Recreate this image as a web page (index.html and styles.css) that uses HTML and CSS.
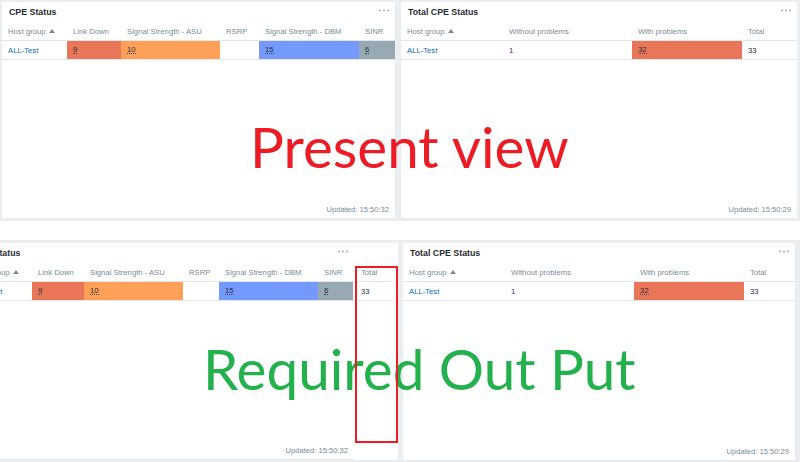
FILE: index.html
```html
<!DOCTYPE html>
<html lang="en">
<head>
<meta charset="utf-8">
<title>CPE Status</title>
<link rel="stylesheet" href="styles.css">
</head>
<body>
<div class="page">
  <section class="shot shot-top">
    <div class="widget w-cpe-top">
      <div class="w-head"><h4>CPE Status</h4><svg class="dots" width="10" height="3" viewBox="0 0 10 3"><circle cx="1" cy="1.5" r="1"/><circle cx="5" cy="1.5" r="1"/><circle cx="9" cy="1.5" r="1"/></svg></div>
      <div class="tbl cols-cpe">
        <div class="th">Host group <svg class="sort" width="6" height="4" viewBox="0 0 6 4"><path d="M0 4L3 0L6 4Z"/></svg></div>
        <div class="th">Link Down</div>
        <div class="th">Signal Strength - ASU</div>
        <div class="th">RSRP</div>
        <div class="th">Signal Strength - DBM</div>
        <div class="th">SINR</div>
        <div class="td"><a class="link">ALL-Test</a></div>
        <div class="td c-high"><span class="num">9</span></div>
        <div class="td c-avg"><span class="num">10</span></div>
        <div class="td"></div>
        <div class="td c-info"><span class="num">15</span></div>
        <div class="td c-nc"><span class="num">6</span></div>
      </div>
      <div class="w-foot">Updated: 15:50:32</div>
    </div>
    <div class="widget w-total-top">
      <div class="w-head"><h4>Total CPE Status</h4><svg class="dots" width="10" height="3" viewBox="0 0 10 3"><circle cx="1" cy="1.5" r="1"/><circle cx="5" cy="1.5" r="1"/><circle cx="9" cy="1.5" r="1"/></svg></div>
      <div class="tbl cols-total-top">
        <div class="th">Host group <svg class="sort" width="6" height="4" viewBox="0 0 6 4"><path d="M0 4L3 0L6 4Z"/></svg></div>
        <div class="th">Without problems</div>
        <div class="th">With problems</div>
        <div class="th">Total</div>
        <div class="td"><a class="link">ALL-Test</a></div>
        <div class="td"><span class="ok">1</span></div>
        <div class="td c-high"><span class="num">32</span></div>
        <div class="td">33</div>
      </div>
      <div class="w-foot">Updated: 15:50:29</div>
    </div>
  </section>

  <div class="spacer"></div>

  <section class="shot shot-bottom">
    <div class="crop">
      <div class="widget w-cpe-bot">
        <div class="w-head"><h4>CPE Status</h4><svg class="dots" width="10" height="3" viewBox="0 0 10 3"><circle cx="1" cy="1.5" r="1"/><circle cx="5" cy="1.5" r="1"/><circle cx="9" cy="1.5" r="1"/></svg></div>
        <div class="tbl cols-cpe-wide">
          <div class="th">Host group <svg class="sort" width="6" height="4" viewBox="0 0 6 4"><path d="M0 4L3 0L6 4Z"/></svg></div>
          <div class="th">Link Down</div>
          <div class="th">Signal Strength - ASU</div>
          <div class="th">RSRP</div>
          <div class="th">Signal Strength - DBM</div>
          <div class="th">SINR</div>
          <div class="th th-total">Total</div>
          <div class="td"><a class="link">ALL-Test</a></div>
          <div class="td c-high"><span class="num">9</span></div>
          <div class="td c-avg"><span class="num">10</span></div>
          <div class="td"></div>
          <div class="td c-info"><span class="num">15</span></div>
          <div class="td c-nc"><span class="num">6</span></div>
          <div class="td th-total">33</div>
        </div>
        <div class="w-foot">Updated: 15:50:32</div>
      </div>
    </div>
    <div class="widget w-total-bot">
      <div class="w-head"><h4>Total CPE Status</h4><svg class="dots" width="10" height="3" viewBox="0 0 10 3"><circle cx="1" cy="1.5" r="1"/><circle cx="5" cy="1.5" r="1"/><circle cx="9" cy="1.5" r="1"/></svg></div>
      <div class="tbl cols-total-bot">
        <div class="th">Host group <svg class="sort" width="6" height="4" viewBox="0 0 6 4"><path d="M0 4L3 0L6 4Z"/></svg></div>
        <div class="th">Without problems</div>
        <div class="th">With problems</div>
        <div class="th">Total</div>
        <div class="td"><a class="link">ALL-Test</a></div>
        <div class="td"><span class="ok">1</span></div>
        <div class="td c-high"><span class="num">32</span></div>
        <div class="td">33</div>
      </div>
      <div class="w-foot">Updated: 15:50:29</div>
    </div>
  </section>

  <div class="note note-present">Present view</div>
  <div class="note note-required">Required Out Put</div>
  <div class="highlight"></div>
</div>
</body>
</html>
```

FILE: styles.css
```css
* {
  box-sizing: border-box;
  margin: 0;
  padding: 0;
}

html, body {
  width: 800px;
  height: 462px;
  overflow: hidden;
  background: #ffffff;
}

body {
  font-family: "Liberation Sans", Arial, sans-serif;
  color: #1f2c33;
}

.page {
  position: relative;
  width: 800px;
  height: 462px;
}

.shot {
  display: flex;
  background: #ebeef0;
}

.shot-top {
  height: 221px;
  gap: 6px;
  padding: 2px 3px 3px 2px;
}

.spacer {
  height: 19px;
  background: #ffffff;
}

.shot-bottom {
  height: 222px;
  gap: 5px;
  padding: 3px 5px 2px 0;
}

.widget {
  background: #ffffff;
  display: flex;
  flex-direction: column;
  height: 100%;
}

.w-cpe-top { width: 393px; }
.w-total-top { width: 396px; }
.w-total-bot { width: 392px; }

.crop {
  width: 398px;
  height: 100%;
  overflow: hidden;
  background: #ffffff;
}

.w-cpe-bot {
  margin-left: -34px;
  width: 388px;
  border-bottom: 1px solid #e6e9eb;
}

.w-head {
  height: 20px;
  display: flex;
  align-items: center;
  justify-content: space-between;
  padding: 0 6px 0 7px;
}

h4 {
  font-size: 8.8px;
  font-weight: bold;
  color: #1f2c33;
}

.dots {
  fill: #a3afb6;
  margin-top: -3px;
}

.tbl {
  display: grid;
}

.cols-cpe { grid-template-columns: 65px 54px 99px 39px 100px 36px; }
.cols-total-top { grid-template-columns: 102px 129px 110px 55px; }
.cols-total-bot { grid-template-columns: 102px 129px 110px 51px; }
.cols-cpe-wide { grid-template-columns: 66px 52px 99px 36px 99px 35px 40px; width: 427px; }

.th, .td {
  height: 19px;
  border-bottom: 1px solid #e2e6e9;
  padding-left: 6px;
  display: flex;
  align-items: center;
  white-space: nowrap;
  font-size: 7.7px;
}

.th {
  color: #768d99;
}

.th-total {
  padding-left: 8px;
}

.sort {
  fill: #768d99;
  margin-left: 3px;
}

.link {
  color: #0a6fb5;
  text-decoration: none;
}

.ok {
  color: #4e2f63;
}

.num {
  line-height: 1;
  border-bottom: 1px dotted #3a4a52;
}

.c-high { background: #e97659; }
.c-avg { background: #ffa059; }
.c-info { background: #7499ff; }
.c-nc { background: #97aab3; }

.w-foot {
  margin-top: auto;
  height: 18px;
  display: flex;
  align-items: center;
  justify-content: flex-end;
  padding-right: 6px;
  font-size: 7.6px;
  color: #768d99;
}

.note {
  position: absolute;
  font-family: Lato, "Open Sans", sans-serif;
  font-size: 56.6px;
  line-height: 1;
  white-space: nowrap;
}

.note-present {
  left: 250px;
  top: 118px;
  color: #ed1c24;
}

.note-required {
  left: 203px;
  top: 340px;
  color: #22b14c;
}

.highlight {
  position: absolute;
  left: 355px;
  top: 266px;
  width: 43px;
  height: 177px;
  border: 2px solid #ed1c24;
}
```
